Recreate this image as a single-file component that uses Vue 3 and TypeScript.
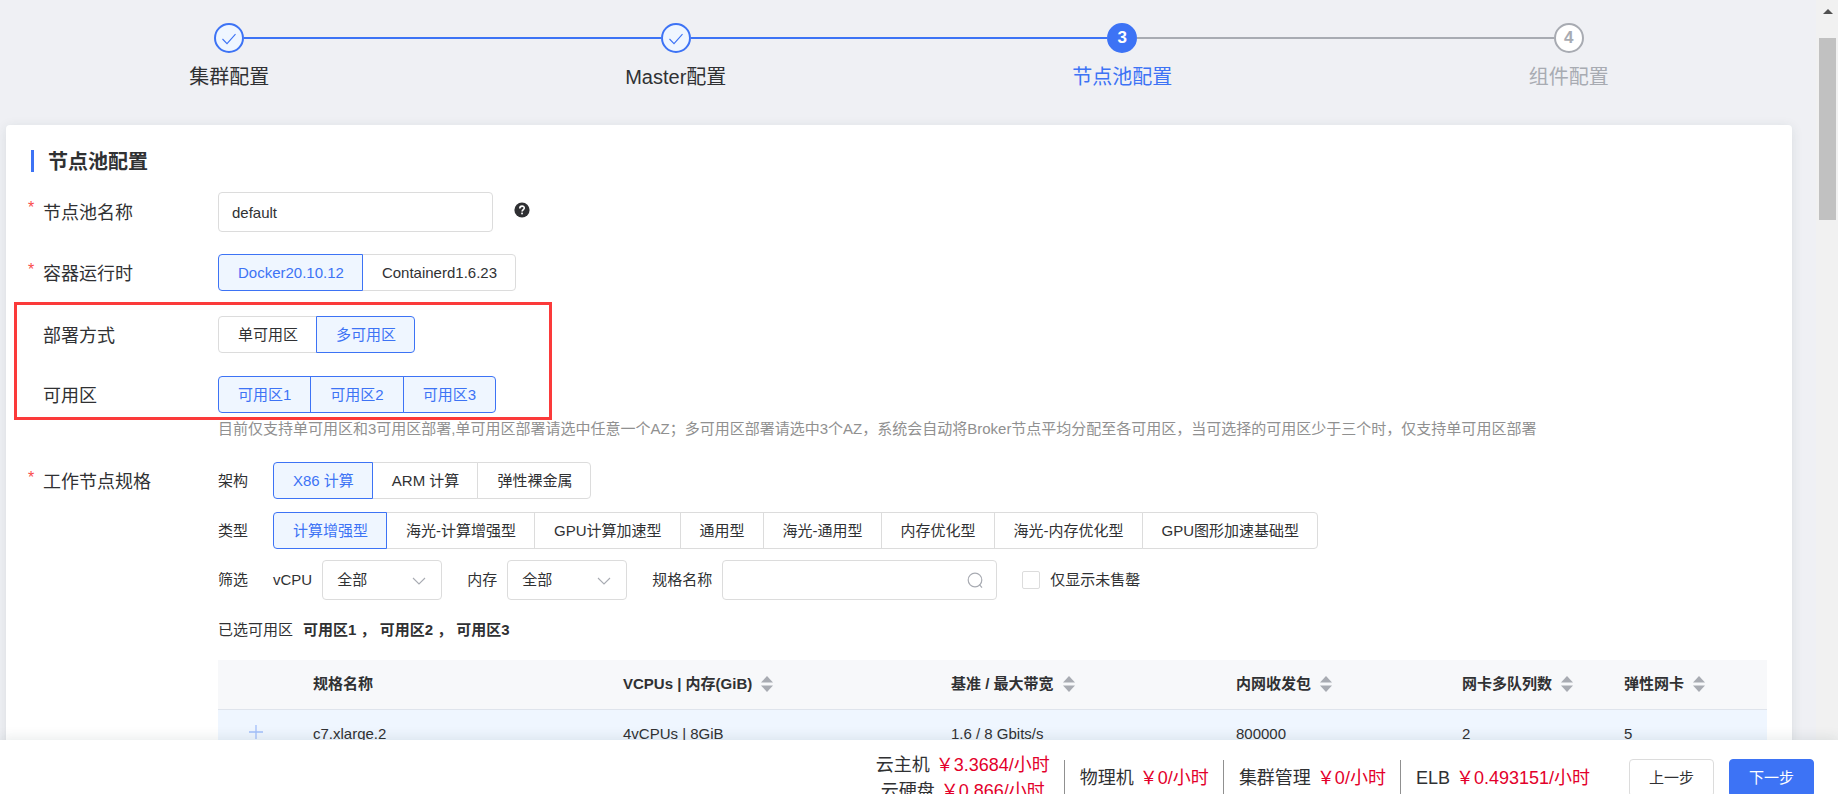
<script setup lang="ts">
import { ref } from 'vue'

type StepState = 'done' | 'active' | 'wait'

interface Step {
  title: string
  state: StepState
}

interface Column {
  key: string
  title: string
  sortable: boolean
}

interface Fee {
  name: string
  price: string
}

const steps: Step[] = [
  { title: '集群配置', state: 'done' },
  { title: 'Master配置', state: 'done' },
  { title: '节点池配置', state: 'active' },
  { title: '组件配置', state: 'wait' },
]

const poolName = ref('default')

const runtimes = ['Docker20.10.12', 'Containerd1.6.23']
const runtime = ref('Docker20.10.12')

const deployModes = ['单可用区', '多可用区']
const deployMode = ref('多可用区')

const zones = ['可用区1', '可用区2', '可用区3']
const selectedZones = ref<string[]>([...zones])

const archs = ['X86 计算', 'ARM 计算', '弹性裸金属']
const arch = ref('X86 计算')

const kinds = [
  '计算增强型',
  '海光-计算增强型',
  'GPU计算加速型',
  '通用型',
  '海光-通用型',
  '内存优化型',
  '海光-内存优化型',
  'GPU图形加速基础型',
]
const kind = ref('计算增强型')

const vcpu = ref('全部')
const memory = ref('全部')
const specName = ref('')
const onlyAvailable = ref(false)

const columns: Column[] = [
  { key: 'name', title: '规格名称', sortable: false },
  { key: 'size', title: 'VCPUs | 内存(GiB)', sortable: true },
  { key: 'bandwidth', title: '基准 / 最大带宽', sortable: true },
  { key: 'pps', title: '内网收发包', sortable: true },
  { key: 'queues', title: '网卡多队列数', sortable: true },
  { key: 'nics', title: '弹性网卡', sortable: true },
]

const rows: Record<string, string>[] = [
  {
    name: 'c7.xlarge.2',
    size: '4vCPUs | 8GiB',
    bandwidth: '1.6 / 8 Gbits/s',
    pps: '800000',
    queues: '2',
    nics: '5',
  },
]

const feeGroups: Fee[][] = [
  [
    { name: '云主机', price: '3.3684' },
    { name: '云硬盘', price: '0.866' },
  ],
  [{ name: '物理机', price: '0' }],
  [{ name: '集群管理', price: '0' }],
  [{ name: 'ELB', price: '0.493151' }],
]

function toggleZone(zone: string) {
  selectedZones.value = zones.filter((z) =>
    z === zone ? !selectedZones.value.includes(z) : selectedZones.value.includes(z),
  )
}
</script>

<template>
  <div class="page">
    <div class="viewport">
      <main class="content">
        <ol class="steps">
          <li v-for="(step, i) in steps" :key="step.title" class="step" :class="step.state">
            <div class="step-head">
              <span class="line" :class="{ hidden: i === 0, blue: step.state !== 'wait' }"></span>
              <span class="dot">
                <svg v-if="step.state === 'done'" width="16" height="16" viewBox="0 0 16 16" fill="none">
                  <path d="M1.5 9 L6 13.6 L14.5 4.2" stroke="#3d73f5" stroke-width="1.1" />
                </svg>
                <template v-else>{{ i + 1 }}</template>
              </span>
              <span class="line" :class="{ hidden: i === steps.length - 1, blue: step.state === 'done' }"></span>
            </div>
            <div class="step-title">{{ step.title }}</div>
          </li>
        </ol>

        <section class="card">
          <h2 class="card-title">节点池配置</h2>

          <div class="row name-row">
            <label class="label required" for="pool-name">节点池名称</label>
            <div class="field inline">
              <input id="pool-name" v-model="poolName" class="text-input" type="text" />
              <svg class="help" width="16" height="16" viewBox="0 0 16 16">
                <circle cx="8" cy="8" r="7.6" fill="#2f3033" />
                <path
                  d="M5.8 6.4 C5.8 3.4 10.4 3.5 10.3 6.1 C10.3 7.6 8.1 7.8 8.1 9.6"
                  fill="none"
                  stroke="#fff"
                  stroke-width="1.6"
                />
                <rect x="7.2" y="10.6" width="1.7" height="1.7" fill="#fff" />
              </svg>
            </div>
          </div>

          <div class="row runtime-row">
            <span id="runtime-label" class="label required">容器运行时</span>
            <div class="segments" role="group" aria-labelledby="runtime-label">
              <button
                v-for="item in runtimes"
                :key="item"
                type="button"
                class="segment"
                :class="{ on: runtime === item }"
                :aria-pressed="runtime === item"
                @click="runtime = item"
              >{{ item }}</button>
            </div>
          </div>

          <div class="zone-block">
            <div class="row deploy-row">
              <span id="deploy-label" class="label">部署方式</span>
              <div class="segments" role="group" aria-labelledby="deploy-label">
                <button
                  v-for="item in deployModes"
                  :key="item"
                  type="button"
                  class="segment"
                  :class="{ on: deployMode === item }"
                  :aria-pressed="deployMode === item"
                  @click="deployMode = item"
                >{{ item }}</button>
              </div>
            </div>

            <div class="row">
              <span id="zone-label" class="label">可用区</span>
              <div class="segments multiple" role="group" aria-labelledby="zone-label">
                <button
                  v-for="item in zones"
                  :key="item"
                  type="button"
                  class="segment"
                  :class="{ on: selectedZones.includes(item) }"
                  :aria-pressed="selectedZones.includes(item)"
                  @click="toggleZone(item)"
                >{{ item }}</button>
              </div>
            </div>
            <div class="highlight"></div>
          </div>

          <p class="hint">目前仅支持单可用区和3可用区部署,单可用区部署请选中任意一个AZ；多可用区部署请选中3个AZ，系统会自动将Broker节点平均分配至各可用区，当可选择的可用区少于三个时，仅支持单可用区部署</p>

          <div class="row spec-row">
            <span class="label required">工作节点规格</span>
            <div class="spec">
              <div class="sub-row arch-row">
                <span id="arch-label" class="sub-label">架构</span>
                <div class="segments" role="group" aria-labelledby="arch-label">
                  <button
                    v-for="item in archs"
                    :key="item"
                    type="button"
                    class="segment"
                    :class="{ on: arch === item }"
                    :aria-pressed="arch === item"
                    @click="arch = item"
                  >{{ item }}</button>
                </div>
              </div>

              <div class="sub-row kind-row">
                <span id="kind-label" class="sub-label">类型</span>
                <div class="segments" role="group" aria-labelledby="kind-label">
                  <button
                    v-for="item in kinds"
                    :key="item"
                    type="button"
                    class="segment"
                    :class="{ on: kind === item }"
                    :aria-pressed="kind === item"
                    @click="kind = item"
                  >{{ item }}</button>
                </div>
              </div>

              <div class="sub-row filter-row">
                <span class="sub-label">筛选</span>
                <div class="filter">
                  <label for="vcpu">vCPU</label>
                  <div class="select">
                    <select id="vcpu" v-model="vcpu">
                      <option>全部</option>
                    </select>
                    <svg width="14" height="8" viewBox="0 0 14 8" fill="none">
                      <path d="M1 1 L7 7 L13 1" stroke="#a8abb2" stroke-width="1.1" />
                    </svg>
                  </div>
                </div>
                <div class="filter">
                  <label for="memory">内存</label>
                  <div class="select">
                    <select id="memory" v-model="memory">
                      <option>全部</option>
                    </select>
                    <svg width="14" height="8" viewBox="0 0 14 8" fill="none">
                      <path d="M1 1 L7 7 L13 1" stroke="#a8abb2" stroke-width="1.1" />
                    </svg>
                  </div>
                </div>
                <div class="filter">
                  <label for="spec-name">规格名称</label>
                  <div class="search">
                    <input id="spec-name" v-model="specName" class="text-input" type="text" />
                    <svg width="16" height="17" viewBox="0 0 16 17" fill="none">
                      <circle cx="8" cy="8" r="6.8" stroke="#a8abb2" stroke-width="1.2" />
                      <path d="M12.2 12.4 L15 15.6" stroke="#a8abb2" stroke-width="1.2" />
                    </svg>
                  </div>
                </div>
                <label class="check">
                  <input v-model="onlyAvailable" type="checkbox" />
                  <span>仅显示未售罄</span>
                </label>
              </div>

              <div class="selected">
                <span>已选可用区</span>
                <strong>{{ selectedZones.join(' ， ') }}</strong>
              </div>

              <table class="table">
                <colgroup>
                  <col class="c-expand" />
                  <col v-for="col in columns" :key="col.key" :class="'c-' + col.key" />
                </colgroup>
                <thead>
                  <tr>
                    <th></th>
                    <th v-for="col in columns" :key="col.key" scope="col">
                      <span class="th">
                        {{ col.title }}
                        <svg v-if="col.sortable" width="12" height="16" viewBox="0 0 12 16" fill="#a8abb2">
                          <path d="M6 0 L12 6.5 H0 Z" />
                          <path d="M0 9.5 H12 L6 16 Z" />
                        </svg>
                      </span>
                    </th>
                  </tr>
                </thead>
                <tbody>
                  <tr v-for="row in rows" :key="row.name">
                    <td class="expand">
                      <button type="button" :aria-label="'展开 ' + row.name">
                        <svg width="14" height="14" viewBox="0 0 14 14" fill="none">
                          <path d="M7 0 V14 M0 7 H14" stroke="#a3bffa" stroke-width="1.3" />
                        </svg>
                      </button>
                    </td>
                    <td v-for="col in columns" :key="col.key">{{ row[col.key] }}</td>
                  </tr>
                </tbody>
              </table>
            </div>
          </div>
        </section>
      </main>

      <div class="scrollbar" aria-hidden="true">
        <svg class="arrow" width="10" height="5" viewBox="0 0 10 5" fill="#505050">
          <path d="M5 0 L10 5 H0 Z" />
        </svg>
        <div class="thumb"></div>
      </div>
    </div>

    <footer class="footer">
      <div class="fees">
        <div v-for="(group, g) in feeGroups" :key="g" class="fee-group">
          <div v-for="fee in group" :key="fee.name" class="fee">
            <span>{{ fee.name }}</span>
            <span class="price">￥{{ fee.price }}/小时</span>
          </div>
        </div>
      </div>
      <button type="button" class="action">上一步</button>
      <button type="button" class="action primary">下一步</button>
    </footer>
  </div>
</template>

<style>
html,
body {
  overflow: hidden;
}
</style>

<style scoped>
* {
  box-sizing: border-box;
}

.page {
  display: flex;
  flex-direction: column;
  height: 100vh;
  background: #eff0f4;
  color: #303133;
  font-family: 'Liberation Sans', 'Noto Sans CJK SC', sans-serif;
  font-size: 15px;
  line-height: 20px;
}

button,
input,
select {
  font: inherit;
  color: inherit;
}

.viewport {
  display: flex;
  flex: 1;
  min-height: 0;
  overflow: hidden;
}

.content {
  flex: 1;
  min-width: 0;
  padding: 23px 24px 0 6px;
}

/* steps */
.steps {
  display: flex;
  height: 102px;
  margin: 0;
  padding: 0;
  list-style: none;
}

.step {
  flex: 1;
  text-align: center;
}

.step-head {
  display: flex;
  align-items: center;
}

.line {
  flex: 1;
  height: 2px;
  background: #a8abb2;
}

.line.blue {
  background: #3d73f5;
}

.line.hidden {
  visibility: hidden;
}

.dot {
  display: flex;
  align-items: center;
  justify-content: center;
  width: 30px;
  height: 30px;
  border: 2px solid #3d73f5;
  border-radius: 50%;
  background: #eff6ff;
  font-size: 17px;
  font-weight: 700;
}

.active .dot {
  background: #3d73f5;
  color: #fff;
}

.wait .dot {
  border-color: #a8abb2;
  background: #fff;
  color: #a8abb2;
}

.step-title {
  margin-top: 10px;
  font-size: 20px;
  line-height: 28px;
}

.active .step-title {
  color: #3d73f5;
}

.wait .step-title {
  color: #a8abb2;
}

/* card */
.card {
  min-height: 800px;
  padding: 25px 25px 0 0;
  border-radius: 4px;
  background: #fff;
  box-shadow: 0 2px 12px rgba(30, 60, 60, 0.1);
}

.card-title {
  height: 22px;
  margin: 0 0 20px 25px;
  padding-left: 14px;
  border-left: 3px solid #3d73f5;
  font-size: 20px;
  font-weight: 700;
  line-height: 24px;
}

.row {
  display: grid;
  grid-template-columns: 212px minmax(0, 1fr);
}

.label {
  position: relative;
  height: 37px;
  padding-left: 37px;
  font-size: 18px;
  line-height: 40px;
}

.required::before {
  content: '*';
  position: absolute;
  left: 22px;
  top: 0;
  font-size: 16px;
  line-height: 32px;
  color: #fa4b4b;
}

.name-row {
  margin-bottom: 22px;
}

.name-row .label {
  line-height: 42px;
}

.runtime-row {
  margin-bottom: 25px;
}

.deploy-row {
  margin-bottom: 23px;
}

.inline {
  display: flex;
}

.help {
  margin: 10px 0 0 21px;
}

.text-input {
  width: 275px;
  height: 40px;
  padding: 0 13px;
  border: 1px solid #dcdcdc;
  border-radius: 4px;
  background: #fff;
  outline: none;
}

.segments {
  display: flex;
}

.segment {
  height: 37px;
  margin: 0 0 0 -1px;
  padding: 0 18px 0 19px;
  border: 1px solid #dcdcdc;
  background: #fff;
  white-space: nowrap;
  cursor: pointer;
}

.multiple .segment {
  padding: 0 19px;
}

.segment:first-child {
  margin-left: 0;
  border-radius: 4px 0 0 4px;
}

.segment:last-child {
  border-radius: 0 4px 4px 0;
}

.segment.on {
  z-index: 1;
  border-color: #3d73f5;
  background: #eff6ff;
  color: #3d73f5;
}

.zone-block {
  position: relative;
}

.highlight {
  position: absolute;
  top: -14px;
  left: 8px;
  width: 538px;
  height: 118px;
  border: 3px solid #fb3a3a;
  pointer-events: none;
}

.hint {
  margin: 6px 0 23px 212px;
  color: #909090;
  white-space: nowrap;
}

.sub-row {
  display: flex;
  align-items: center;
}

.sub-label {
  width: 55px;
}

.arch-row {
  margin-bottom: 13px;
}

.kind-row {
  margin-bottom: 11px;
}

.filter {
  display: flex;
  align-items: center;
  gap: 10px;
  margin-right: 25px;
}

.select,
.search {
  position: relative;
}

.select select {
  display: block;
  width: 120px;
  height: 40px;
  padding: 0 14px;
  border: 1px solid #dcdcdc;
  border-radius: 4px;
  background: #fff;
  appearance: none;
}

.select svg {
  position: absolute;
  top: 17px;
  right: 16px;
  pointer-events: none;
}

.search .text-input {
  display: block;
  padding-right: 40px;
}

.search svg {
  position: absolute;
  top: 12px;
  right: 14px;
}

.check {
  display: flex;
  align-items: center;
  gap: 10px;
}

.check input {
  width: 18px;
  height: 18px;
  margin: 0;
  border: 1px solid #dcdcdc;
  border-radius: 2px;
  background: #fff;
  appearance: none;
}

.check input:checked {
  background: #3d73f5;
}

.selected {
  display: flex;
  gap: 10px;
  margin: 20px 0;
}

/* table */
.table {
  width: 100%;
  border-collapse: collapse;
  table-layout: fixed;
  text-align: left;
}

.c-expand {
  width: 84px;
}

.c-name {
  width: 310px;
}

.c-size {
  width: 328px;
}

.c-bandwidth {
  width: 285px;
}

.c-pps {
  width: 226px;
}

.c-queues {
  width: 162px;
}

.c-nics {
  width: 154px;
}

.table th,
.table td {
  height: 49px;
  padding: 0 11px;
  border-bottom: 1px solid #dfe4ec;
}

.table th {
  background: #f7f8fa;
  font-weight: 700;
}

.table td {
  background: #eff6ff;
}

.th {
  display: flex;
  align-items: center;
  gap: 9px;
}

.table .expand {
  padding: 0 9px 0 0;
  text-align: center;
}

.expand button {
  padding: 0;
  border: 0;
  background: none;
}

.expand svg {
  display: block;
}

/* scrollbar */
.scrollbar {
  width: 22px;
  padding: 9px 2px 0 3px;
  background: #f1f1f1;
}

.arrow {
  display: block;
  margin: 0 auto 24px;
}

.thumb {
  height: 182px;
  background: #c1c1c1;
}

/* footer */
.footer {
  position: relative;
  display: flex;
  align-items: flex-start;
  justify-content: flex-end;
  height: 54px;
  padding: 0 24px 0 0;
  background: #fff;
  box-shadow: 0 -2px 12px rgba(30, 60, 60, 0.1);
}

.fees {
  display: flex;
  margin-right: 39px;
  padding-top: 12px;
  font-size: 18px;
  line-height: 26px;
}

.fee-group {
  display: flex;
  flex-direction: column;
  align-items: center;
  justify-content: center;
  height: 52px;
  padding: 0 15px;
  background: linear-gradient(#909090, #909090) right 8px / 1px 100% no-repeat;
}

.fee-group:last-child {
  padding-right: 0;
  background: none;
}

.fee {
  display: flex;
  gap: 6px;
  white-space: nowrap;
}

.price {
  color: #e3002b;
}

.action {
  width: 85px;
  height: 38px;
  margin: 19px 0 0;
  border: 1px solid #dcdcdc;
  border-radius: 4px;
  background: #fff;
  cursor: pointer;
}

.action.primary {
  margin-left: 15px;
  border-color: #3d73f5;
  background: #3d73f5;
  color: #fff;
}
</style>
